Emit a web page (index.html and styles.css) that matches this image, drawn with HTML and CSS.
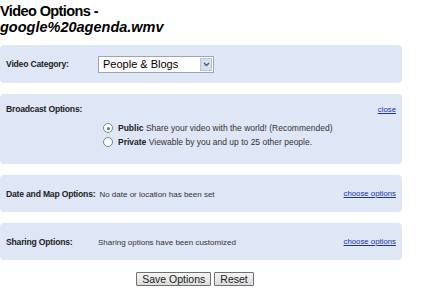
FILE: index.html
```html
<!DOCTYPE html>
<html>
<head>
<meta charset="utf-8">
<link rel="stylesheet" href="styles.css">
</head>
<body>
<h1 class="title"><span class="t1">Video Options -</span><br><em>google%20agenda.wmv</em></h1>

<div class="panel panel-cat">
  <div class="label">Video Category:</div>
  <div class="select">
    <span class="select-text">People &amp; Blogs</span>
    <span class="select-btn"><svg width="7" height="5" viewBox="0 0 7 5"><path d="M1 1 L3.5 3.5 L6 1" fill="none" stroke="#4a5a7a" stroke-width="1.4"/></svg></span>
  </div>
</div>

<div class="panel panel-bc">
  <div class="row-top">
    <div class="label">Broadcast Options:</div>
    <a class="link" href="#">close</a>
  </div>
  <div class="radios">
    <div class="radio-row"><span class="radio checked"></span><b>Public</b>&nbsp;Share your video with the world! (Recommended)</div>
    <div class="radio-row"><span class="radio"></span><b>Private</b>&nbsp;Viewable by you and up to 25 other people.</div>
  </div>
</div>

<div class="panel panel-row">
  <div class="label">Date and Map Options:</div>
  <div class="info">No date or location has been set</div>
  <a class="link" href="#">choose options</a>
</div>

<div class="panel panel-row panel-share">
  <div class="label">Sharing Options:</div>
  <div class="info">Sharing options have been customized</div>
  <a class="link" href="#">choose options</a>
</div>

<div class="buttons">
  <button class="btn">Save Options</button>
  <button class="btn">Reset</button>
</div>
</body>
</html>
```

FILE: styles.css
```css
html, body {
  margin: 0;
  padding: 0;
  background: #fff;
}
body {
  font-family: "Liberation Sans", Arial, sans-serif;
  color: #000;
  width: 425px;
}
.title {
  margin: 0;
  padding: 3px 0 0 0;
  font-size: 14.5px;
  line-height: 16px;
  font-weight: bold;
}
.title .t1 {
  letter-spacing: -0.6px;
}
.title em {
  font-style: italic;
}
.panel {
  background: #dfe6f6;
  border-radius: 4px;
  width: 402px;
  box-sizing: border-box;
}
.label {
  font-size: 8.6px;
  font-weight: bold;
  letter-spacing: -0.2px;
  color: #222;
  min-width: 88px;
  padding-right: 4px;
  flex: none;
  white-space: nowrap;
}
.panel-cat {
  margin-top: 10px;
  height: 38px;
  display: flex;
  align-items: center;
  padding-left: 6px;
}
.select {
  display: flex;
  align-items: center;
  width: 116px;
  height: 17px;
  box-sizing: border-box;
  border: 1px solid #9aa5b8;
  background: #fff;
  justify-content: space-between;
}
.select-text {
  font-size: 11px;
  padding-left: 4px;
}
.select-btn {
  width: 12px;
  height: 13px;
  margin-right: 1px;
  background: #d6dff0;
  border: 1px solid #b6c2d8;
  box-sizing: border-box;
  display: flex;
  align-items: center;
  justify-content: center;
}
.panel-bc {
  margin-top: 11px;
  height: 70px;
  padding: 10px 6px 0 6px;
}
.row-top {
  display: flex;
  justify-content: space-between;
  align-items: center;
}
.link {
  font-size: 7.8px;
  color: #1a33a8;
  text-decoration: underline;
}
.radios {
  margin-left: 97px;
  margin-top: 7px;
  font-size: 8.5px;
  color: #333;
}
.radio-row {
  display: flex;
  align-items: center;
  height: 14px;
}
.radio-row b {
  color: #222;
}
.radio {
  width: 10px;
  height: 10px;
  border-radius: 50%;
  border: 1px solid #7a8290;
  background: #fff;
  margin-right: 5px;
  box-sizing: border-box;
  position: relative;
}
.radio.checked::after {
  content: "";
  position: absolute;
  left: 2.5px;
  top: 2.5px;
  width: 3px;
  height: 3px;
  border-radius: 50%;
  background: #3a9a3a;
}
.panel-row {
  margin-top: 11px;
  height: 37px;
  display: flex;
  align-items: center;
  padding: 0 6px;
}
.panel-row .link {
  margin-left: auto;
}
.info {
  font-size: 8px;
  color: #333;
  padding-top: 2px;
}
.buttons {
  margin-top: 12px;
  display: flex;
  justify-content: center;
  gap: 3px;
  width: 390px;
}
.btn {
  font-family: "Liberation Sans", Arial, sans-serif;
  font-size: 10.5px;
  height: 14px;
  padding: 0 5px;
  line-height: 12px;
  background: linear-gradient(#f4f4f4, #dcdcdc);
  border: 1px solid #707070;
  border-radius: 1px;
  color: #222;
}
```
